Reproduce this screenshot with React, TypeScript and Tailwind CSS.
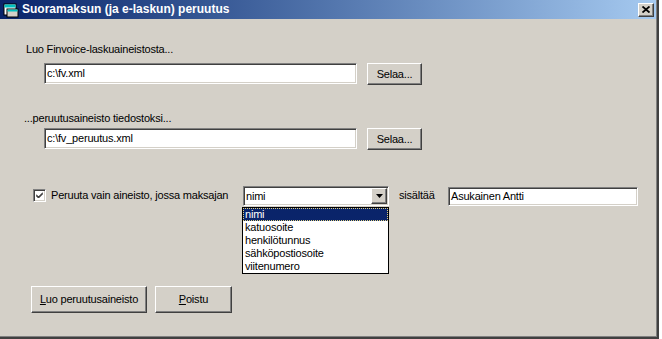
import React from "react";

const raised =
  "bg-[#d4d0c8] border border-t-white border-l-white border-r-[#404040] border-b-[#404040] shadow-[inset_-1px_-1px_0_#808080]";
const sunken =
  "bg-white border border-t-[#808080] border-l-[#808080] border-r-white border-b-white shadow-[inset_1px_1px_0_#404040,inset_-1px_-1px_0_#d4d0c8]";

function Selaa() {
  return (
    <div className={`${raised} w-[55px] h-[22px] flex items-center justify-center`}>
      Selaa...
    </div>
  );
}

function TextBox({ value, w, h }: { value: string; w: string; h: string }) {
  return (
    <div className={`${sunken} ${w} ${h} flex items-center pl-[2px] pb-[1px]`}>
      {value}
    </div>
  );
}

export default function App() {
  const items = ["nimi", "katuosoite", "henkilötunnus", "sähköpostiosoite", "viitenumero"];
  return (
    <div className="w-[662px] h-[339px] bg-white overflow-hidden">
      <div className="w-[659px] h-[339px] bg-[#d4d0c8] border-r-2 border-b-2 border-[#404040] shadow-[inset_-1px_-1px_0_#808080] flex flex-col font-['Liberation_Sans',Arial,sans-serif] text-[11px] leading-[13px] tracking-[-0.2px] text-black">
        {/* Title bar */}
        <div className="h-[19px] shrink-0 bg-gradient-to-r from-[#0a246a] to-[#a6caf0] flex items-center mr-[1px]">
          <svg width="16" height="16" viewBox="0 0 16 16" className="ml-[3px]">
            <rect x="1" y="2" width="12" height="11" fill="#ffffff" stroke="#000" strokeWidth="1" />
            <rect x="1.5" y="2.5" width="11" height="3" fill="#00c0c0" />
            <rect x="4" y="7" width="11" height="8" fill="#d4d0c8" stroke="#000" strokeWidth="1" />
            <rect x="4.5" y="7.5" width="10" height="2" fill="#00c0c0" />
          </svg>
          <span className="ml-[3px] text-white font-bold text-[12px] tracking-[0px]">
            Suoramaksun (ja e-laskun) peruutus
          </span>
          <div className="flex-1" />
          <div className={`${raised} w-[16px] h-[14px] mr-[2px] flex items-center justify-center`}>
            <svg width="8" height="7" viewBox="0 0 8 7">
              <path d="M0.5 0.5 L7.5 6.5 M7.5 0.5 L0.5 6.5" stroke="#000" strokeWidth="1.8" />
            </svg>
          </div>
        </div>

        <div className="pl-[26px] mt-[24px]">Luo Finvoice-laskuaineistosta...</div>
        <div className="flex items-start gap-[10px] pl-[44px] mt-[7px]">
          <TextBox value="c:\fv.xml" w="w-[313px]" h="h-[21px]" />
          <Selaa />
        </div>

        <div className="pl-[24px] mt-[27px]">...peruutusaineisto tiedostoksi...</div>
        <div className="flex items-start gap-[10px] pl-[44px] mt-[3px]">
          <TextBox value="c:\fv_peruutus.xml" w="w-[313px]" h="h-[21px]" />
          <Selaa />
        </div>

        {/* Filter row */}
        <div className="flex items-start pl-[33px] mt-[36px] h-[20px]">
          <div className={`${sunken} w-[13px] h-[13px] mt-[3px] flex items-center justify-center`}>
            <svg width="7" height="7" viewBox="0 0 7 7">
              <path d="M0 2.5 L2.5 5 L7 0.5 M0 3.5 L2.5 6 L7 1.5" stroke="#000" strokeWidth="1" fill="none" />
            </svg>
          </div>
          <span className="ml-[5px] w-[192px] mt-[3px]">
            Peruuta vain aineisto, jossa maksajan
          </span>
          <div className="relative">
            <div className={`${sunken} w-[146px] h-[20px] flex items-center`}>
              <span className="pl-[2px] flex-1">nimi</span>
              <div className={`${raised} w-[16px] h-[16px] flex items-center justify-center mr-[1px]`}>
                <svg width="7" height="4" viewBox="0 0 7 4">
                  <path d="M0 0 H7 L3.5 4 Z" fill="#000" />
                </svg>
              </div>
            </div>
            <div className="absolute left-[-1px] top-[21px] w-[147px] h-[67px] bg-white border border-black z-10 flex flex-col">
              {items.map((it, i) => (
                <div
                  key={it}
                  className={
                    i === 0
                      ? "h-[13px] pl-[2px] bg-[#0a246a] text-white outline-1 outline-dotted outline-[#e0d080] -outline-offset-1"
                      : "h-[13px] pl-[2px]"
                  }
                >
                  {it}
                </div>
              ))}
            </div>
          </div>
          <span className="ml-[10px] w-[49px] mt-[3px]">sisältää</span>
          <div className="mt-[1px]">
            <TextBox value="Asukainen Antti" w="w-[190px]" h="h-[19px]" />
          </div>
        </div>

        {/* Bottom buttons */}
        <div className="flex gap-[8px] pl-[31px] mt-[80px]">
          <div className={`${raised} w-[116px] h-[27px] flex items-center justify-center`}>
            <span>
              <span className="underline">L</span>uo peruutusaineisto
            </span>
          </div>
          <div className={`${raised} w-[77px] h-[27px] flex items-center justify-center`}>
            <span>
              <span className="underline">P</span>oistu
            </span>
          </div>
        </div>
      </div>
    </div>
  );
}
